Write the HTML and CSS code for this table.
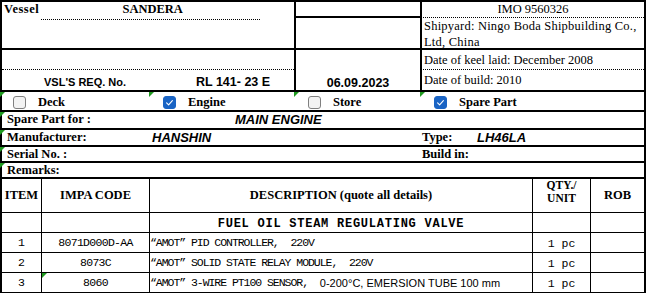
FILE: index.html
```html
<!DOCTYPE html>
<html>
<head>
<meta charset="utf-8">
<link rel="stylesheet" href="styles.css">
</head>
<body>
<div class="sheet">
  <div class="top">
    <div class="c vessel"><span class="lbl">Vessel</span><span class="vname">SANDERA</span></div>
    <div class="c m1"></div>
    <div class="c r1">IMO 9560326</div>
    <div class="c m2"></div>
    <div class="c r2">Shipyard: Ningo Boda Shipbuilding Co.,<br>Ltd, China</div>
    <div class="c l3"></div>
    <div class="c m34">06.09.2023</div>
    <div class="c r3">Date of keel laid: December 2008</div>
    <div class="c l4"><span class="req">VSL'S REQ. No.</span><span class="reqno">RL 141- 23 E</span></div>
    <div class="c r4">Date of build: 2010</div>
  </div>

  <div class="checks">
    <div class="chk flag first"><span class="box"></span><span class="clbl">Deck</span></div>
    <div class="chk flag"><span class="box on"><svg viewBox="0 0 13 13" width="13" height="13"><path d="M3.6 6.9 L5.6 8.8 L9.4 4.6" fill="none" stroke="#fff" stroke-width="1.1" stroke-linecap="round" stroke-linejoin="round"/></svg></span><span class="clbl">Engine</span></div>
    <div class="chk flag"><span class="box"></span><span class="clbl">Store</span></div>
    <div class="chk flag"><span class="box on"><svg viewBox="0 0 13 13" width="13" height="13"><path d="M3.6 6.9 L5.6 8.8 L9.4 4.6" fill="none" stroke="#fff" stroke-width="1.1" stroke-linecap="round" stroke-linejoin="round"/></svg></span><span class="clbl">Spare Part</span></div>
  </div>

  <div class="info r-spare">
    <div class="ilbl flag">Spare Part for :</div>
    <div class="ival main">MAIN ENGINE</div>
    <div></div>
    <div></div>
  </div>
  <div class="info r-manu">
    <div class="ilbl flag">Manufacturer:</div>
    <div class="ival maker">HANSHIN</div>
    <div class="ilbl2">Type:</div>
    <div class="ival type">LH46LA</div>
  </div>
  <div class="info r-serial">
    <div class="ilbl flag">Serial No. :</div>
    <div></div>
    <div class="ilbl2">Build in:</div>
    <div></div>
  </div>
  <div class="info r-rem">
    <div class="ilbl flag">Remarks:</div>
    <div></div>
    <div></div>
    <div></div>
  </div>

  <div class="trow thead">
    <div class="tc th">ITEM</div>
    <div class="tc th">IMPA CODE</div>
    <div class="tc th">DESCRIPTION (quote all details)</div>
    <div class="tc th qty">QTY./<br>UNIT</div>
    <div class="tc th">ROB</div>
  </div>
  <div class="trow ttitle">
    <div class="tc"></div>
    <div class="tc"></div>
    <div class="tc title">FUEL OIL STEAM REGULATING VALVE</div>
    <div class="tc"></div>
    <div class="tc"></div>
  </div>
  <div class="trow">
    <div class="tc mono ctr">1</div>
    <div class="tc mono ctr code">8071D000D-AA</div>
    <div class="tc mono desc">“AMOT” PID CONTROLLER,  220V</div>
    <div class="tc mono ctr pc">1 pc</div>
    <div class="tc"></div>
  </div>
  <div class="trow">
    <div class="tc mono ctr">2</div>
    <div class="tc mono ctr code">8073C</div>
    <div class="tc mono desc">“AMOT” SOLID STATE RELAY MODULE,  220V</div>
    <div class="tc mono ctr pc">1 pc</div>
    <div class="tc"></div>
  </div>
  <div class="trow last">
    <div class="tc mono ctr">3</div>
    <div class="tc mono ctr code flag">8060</div>
    <div class="tc mono desc">“AMOT” 3-WIRE PT100 SENSOR, <span class="sans">0-200°C, EMERSION TUBE 100 mm</span></div>
    <div class="tc mono ctr pc">1 pc</div>
    <div class="tc"></div>
  </div>
</div>
</body>
</html>
```

FILE: styles.css
```css
* { box-sizing: border-box; }
html, body { margin: 0; padding: 0; background: #fff; }
body { color: #000; font-family: "Liberation Serif", serif; }

.sheet {
  width: 646px;
  border-top: 2px solid #000;
  border-left: 2px solid #000;
  border-right: 2px solid #000;
}

/* ---------- top block ---------- */
.top {
  display: grid;
  grid-template-columns: 292px 126px 1fr;
  grid-template-rows: 16px 32px 20px 20px;
  border-bottom: 2px solid #000;
}
.c { font-size: 12.5px; }
.vessel { grid-column: 1; grid-row: 1 / 3; border-bottom: 2px solid #000; display: flex; align-items: flex-start; padding-left: 2px; }
.vessel .lbl { font-weight: bold; letter-spacing: 0.5px; line-height: 15px; }
.vessel .vname { font-weight: bold; line-height: 15px; padding-bottom: 2px; margin-left: 2px; width: 219px; text-align: center; border-bottom: 1px dotted #000; padding-left: 4px; }
.m1 { grid-column: 2; grid-row: 1; border-left: 2px solid #000; border-bottom: 2px solid #000; }
.m2 { grid-column: 2; grid-row: 2; border-left: 2px solid #000; border-bottom: 2px solid #000; }
.m34 { grid-column: 2; grid-row: 3 / 5; border-left: 2px solid #000; display: flex; align-items: flex-end; justify-content: center;
  font-family: "Liberation Sans", sans-serif; font-weight: bold; font-size: 12.5px; line-height: 14px; }
.r1 { grid-column: 3; grid-row: 1; border-left: 2px solid #000; border-bottom: 1px dotted #000; text-align: center; line-height: 15px; }
.r2 { grid-column: 3; grid-row: 2; border-left: 2px solid #000; border-bottom: 2px solid #000; line-height: 16px; padding-left: 2px; letter-spacing: 0.22px; }
.l3 { grid-column: 1; grid-row: 3; border-bottom: 1px dotted #000; }
.r3 { grid-column: 3; grid-row: 3; border-left: 2px solid #000; border-bottom: 1px dotted #000; line-height: 18px; padding: 1px 0 0 2px; }
.l4 { grid-column: 1; grid-row: 4; display: flex; align-items: baseline; padding: 4px 0 0 42px;
  font-family: "Liberation Sans", sans-serif; font-weight: bold; line-height: 16px; }
.l4 .req { font-size: 11px; width: 152px; }
.l4 .reqno { font-size: 12.5px; }
.r4 { grid-column: 3; grid-row: 4; border-left: 2px solid #000; line-height: 18px; padding: 1px 0 0 2px; }

/* ---------- flags (excel green corner) ---------- */
.flag { position: relative; }
.flag::before {
  content: "";
  position: absolute;
  left: 0; top: 0;
  width: 0; height: 0;
  border-top: 5px solid #1f9a1f;
  border-right: 5px solid transparent;
}

/* ---------- checkbox row ---------- */
.checks {
  display: grid;
  grid-template-columns: 147px 145px 126px 1fr;
  height: 20px;
  border-bottom: 2px solid #000;
}
.chk { display: flex; align-items: flex-end; padding: 0 0 1px 14px; }
.chk.first { padding-left: 11px; }
.chk.first::before { left: -2px; }
.box {
  width: 13px; height: 13px;
  border: 1px solid #808080;
  border-radius: 3px;
  background: #f3f3f3;
  flex: none;
}
.box.on { background: #1a64c4; border-color: #1a64c4; }
.box svg { display: block; margin: -1px; }
.clbl { margin-left: 12px; font-weight: bold; font-size: 12.5px; line-height: 13px; }

/* ---------- info rows ---------- */
.info {
  display: grid;
  grid-template-columns: 147px 271px 55px 1fr;
  border-bottom: 2px solid #000;
  font-size: 12.5px;
}
.r-spare { height: 18px; }
.r-manu { height: 17px; }
.r-serial { height: 16px; }
.r-rem { height: 16px; }
.info > div { line-height: 15px; }
.info .flag::before { left: -2px; }
.ilbl { font-weight: bold; padding-left: 5px; white-space: nowrap; }
.ilbl2 { font-weight: bold; padding-left: 2px; white-space: nowrap; }
.ival { font-family: "Liberation Sans", sans-serif; font-weight: bold; font-style: italic; font-size: 13px; white-space: nowrap; }
.main { padding-left: 86px; }
.maker { padding-left: 3px; }
.type { padding-left: 2px; }

/* ---------- table ---------- */
.trow {
  display: grid;
  grid-template-columns: 39px 108px 383px 58px 1fr;
  height: 20px;
  border-bottom: 1px solid #000;
}
.trow.thead { height: 34px; }
.tc + .tc { border-left: 1px solid #000; }
.tc { display: flex; align-items: center; white-space: pre; }
.th { justify-content: center; font-weight: bold; font-size: 12.5px; text-align: center; }
.th.qty { font-size: 11.5px; line-height: 13px; align-items: flex-start; padding-top: 0; }
.title { justify-content: center; font-family: "Liberation Mono", monospace; font-weight: bold; font-size: 12px; letter-spacing: 0.75px; padding-top: 2px; }
.mono { font-family: "Liberation Mono", monospace; font-size: 11.5px; }
.ctr { justify-content: center; }
.code { letter-spacing: -0.7px; }
.desc { letter-spacing: -1.05px; padding-left: 0; }
.pc { padding-top: 2px; }
.sans { font-family: "Liberation Sans", sans-serif; font-size: 11px; letter-spacing: 0; margin-left: 6px; }
```
